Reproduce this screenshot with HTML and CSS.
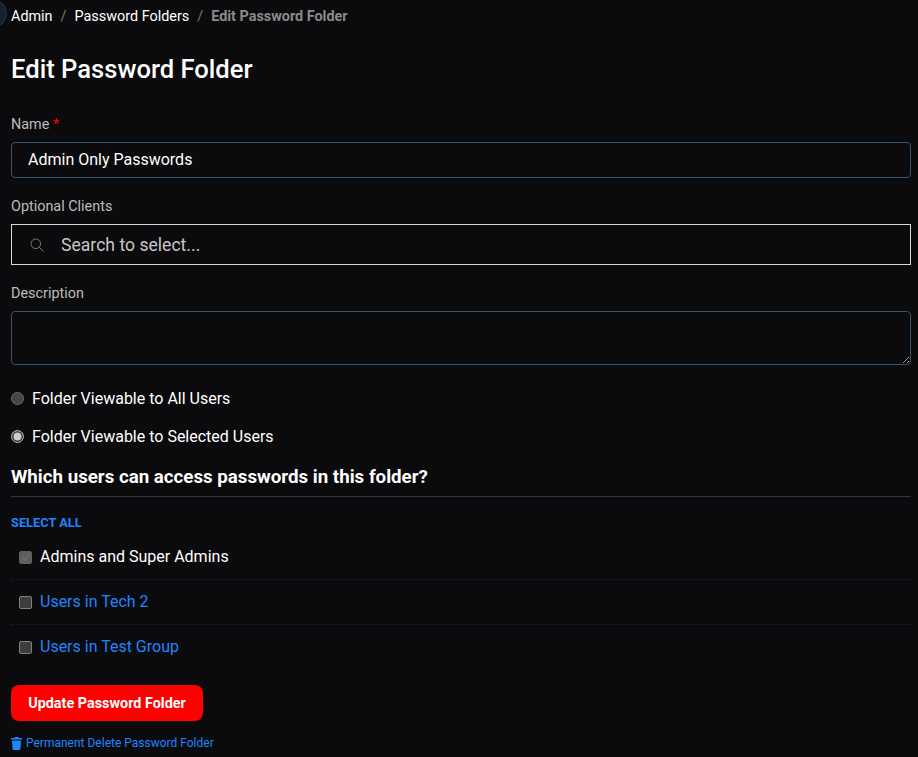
FILE: index.html
```html
<!DOCTYPE html>
<html lang="en">

<head>
  <meta charset="utf-8">
  <meta name="viewport" content="width=device-width, initial-scale=1.0">
  <title>Edit Password Folder</title>
  <link rel="stylesheet" href="styles.css">
</head>

<body>
  <div class="corner-avatar"></div>
  <main class="page">
    <nav class="breadcrumb">
      <a href="#">Admin</a>
      <span class="sep">/</span>
      <a href="#">Password Folders</a>
      <span class="sep">/</span>
      <span class="current">Edit Password Folder</span>
    </nav>

    <h1>Edit Password Folder</h1>

    <form>
      <label class="field-label name-label" for="name">Name <span class="req">*</span></label>
      <input class="text-input" type="text" id="name" value="Admin Only Passwords">

      <label class="field-label clients-label">Optional Clients</label>
      <div class="search-select">
        <svg class="search-icon" width="14" height="14" viewBox="0 0 14 14" fill="none" stroke="#777" stroke-width="1">
          <circle cx="5.8" cy="5.8" r="4.8"></circle>
          <path d="M9.3 9.3 L13.5 13.5"></path>
        </svg>
        <span>Search to select...</span>
      </div>

      <label class="field-label desc-label" for="description">Description</label>
      <textarea class="text-area" id="description"></textarea>

      <label class="radio-row first-radio"><span class="radio"></span>Folder Viewable to All Users</label>
      <label class="radio-row"><span class="radio checked"></span>Folder Viewable to Selected Users</label>

      <h2>Which users can access passwords in this folder?</h2>

      <a href="#" class="select-all">SELECT ALL</a>

      <ul class="user-list">
        <li>
          <span class="check disabled">
            <svg width="10" height="10" viewBox="0 0 10 10" fill="none" stroke="#6e6e6e" stroke-width="1.5">
              <path d="M1.5 5.5 L4 8 L8.5 2"></path>
            </svg>
          </span>
          <span>Admins and Super Admins</span>
        </li>
        <li>
          <span class="check"></span>
          <a href="#">Users in Tech 2</a>
        </li>
        <li>
          <span class="check"></span>
          <a href="#">Users in Test Group</a>
        </li>
      </ul>

      <button type="button" class="btn-update">Update Password Folder</button>

      <a href="#" class="delete-link">
        <svg width="11" height="13" viewBox="0 0 11 13" fill="#1e86ff">
          <path d="M3.8 0 H7.2 L7.7 1 H11 V2.6 H0 V1 H3.3 Z"></path>
          <path d="M1 3.5 H10 L9.4 12 Q9.3 13 8.4 13 H2.6 Q1.7 13 1.6 12 Z"></path>
        </svg>
        Permanent Delete Password Folder
      </a>
    </form>
  </main>
</body>

</html>
```

FILE: styles.css
```css
html,
body {
  margin: 0;
  padding: 0;
  height: 757px;
  overflow: hidden;
  background-color: #0b0a0c;
}

body {
  font-family: Roboto, "Liberation Sans", sans-serif;
  color: #fff;
}

a {
  color: #1e86ff;
  text-decoration: none;
}

.corner-avatar {
  position: absolute;
  left: -22px;
  top: -1px;
  width: 27px;
  height: 27px;
  border-radius: 50%;
  background-color: #16232c;
  border: 1px solid #24394a;
}

.page {
  padding: 0 7px 0 11px;
}

.breadcrumb {
  display: flex;
  align-items: center;
  height: 16px;
  padding-top: 9px;
  font-size: 14.4px;
  line-height: 16px;
}

.breadcrumb a {
  color: #fff;
}

.sep {
  color: #7a7a7a;
  margin: 0 8px;
}

.current {
  color: #8a8a8a;
  font-weight: 700;
}

h1 {
  margin: 27px 0 0;
  font-size: 25.6px;
  line-height: 34px;
  font-weight: 500;
}

.field-label {
  display: block;
  font-size: 14.4px;
  line-height: 16px;
  color: #bdbdbd;
}

.name-label {
  margin-top: 31px;
}

.req {
  color: #f00;
}

.text-input {
  display: block;
  box-sizing: border-box;
  width: 100%;
  height: 36px;
  margin-top: 9px;
  padding: 0 16px 2px;
  background: transparent;
  border: 1px solid #35526e;
  border-radius: 4px;
  color: #fff;
  font-family: inherit;
  font-size: 16px;
}

.clients-label {
  margin-top: 21px;
}

.search-select {
  display: flex;
  align-items: center;
  box-sizing: border-box;
  height: 41px;
  margin-top: 9px;
  padding-left: 18px;
  border: 1px solid #d8d8d8;
  font-size: 17.6px;
  color: #c8c8c8;
}

.search-icon {
  margin-right: 17px;
}

.desc-label {
  margin-top: 21px;
}

.text-area {
  display: block;
  box-sizing: border-box;
  width: 100%;
  height: 54px;
  margin-top: 9px;
  background: transparent;
  border: 1px solid #35526e;
  border-radius: 4px;
  color: #fff;
  resize: vertical;
  color-scheme: dark;
}

.radio-row {
  display: flex;
  align-items: center;
  height: 20px;
  margin-top: 18px;
  font-size: 16px;
}

.first-radio {
  margin-top: 23px;
}

.radio {
  box-sizing: border-box;
  width: 13px;
  height: 13px;
  margin-right: 8px;
  border-radius: 50%;
  border: 1px solid #6e6e6e;
  background-color: #444;
}

.radio.checked {
  margin-top: 1px;
  border: 1px solid #a0a0a0;
  background-color: #ccc;
  box-shadow: inset 0 0 0 1.5px #333;
}

h2 {
  margin: 20px 0 0;
  padding-bottom: 8px;
  border-bottom: 1px solid #27394c;
  font-size: 18.72px;
  line-height: 22px;
  font-weight: 700;
}

.select-all {
  display: block;
  margin-top: 18px;
  font-size: 12.8px;
  line-height: 16px;
  font-weight: 700;
}

.user-list {
  list-style: none;
  margin: 4px 0 0;
  padding: 0;
}

.user-list li {
  display: flex;
  align-items: center;
  height: 42px;
  padding: 0 0 2px 8px;
  border-bottom: 1px dotted #16212b;
  font-size: 16px;
}

.user-list li:last-child {
  border-bottom: none;
}

.check {
  display: flex;
  align-items: center;
  justify-content: center;
  box-sizing: border-box;
  width: 13px;
  height: 13px;
  margin: 2px 8px 0 0;
  border: 1px solid #808080;
  border-radius: 2px;
  background-color: #3d3d3d;
}

.check.disabled {
  border-color: #5e5e5e;
  background-color: #5e5e5e;
}

.btn-update {
  display: block;
  width: 192px;
  height: 36px;
  margin-top: 16px;
  background-color: #f00;
  border: none;
  border-radius: 8px;
  color: #fff;
  font-family: inherit;
  font-size: 14.4px;
  font-weight: 700;
}

.delete-link {
  display: flex;
  align-items: center;
  gap: 4px;
  margin-top: 15px;
  font-size: 12px;
  line-height: 14px;
}
```
